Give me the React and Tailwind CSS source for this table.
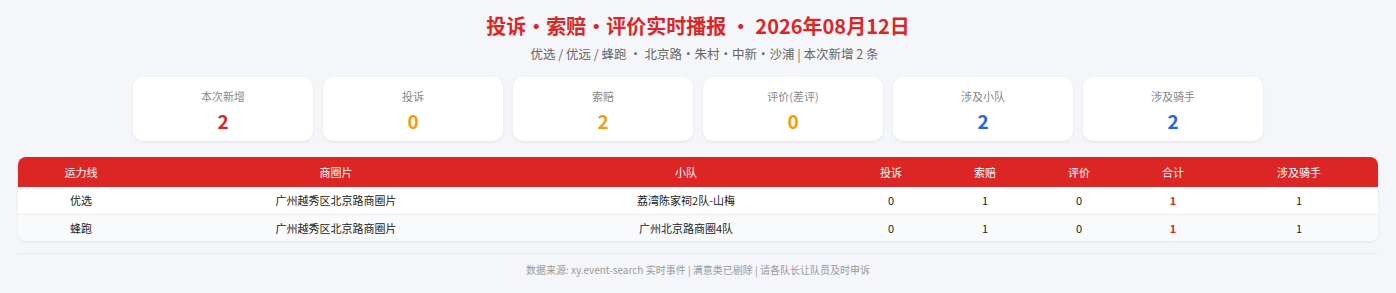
const cards = [
  { label: "本次新增", value: 2, color: "text-[#dc2626]" },
  { label: "投诉", value: 0, color: "text-[#f59e0b]" },
  { label: "索赔", value: 2, color: "text-[#f59e0b]" },
  { label: "评价(差评)", value: 0, color: "text-[#f59e0b]" },
  { label: "涉及小队", value: 2, color: "text-[#2563eb]" },
  { label: "涉及骑手", value: 2, color: "text-[#2563eb]" },
];

const rows = [
  { line: "优选", area: "广州越秀区北京路商圈片", team: "荔湾陈家祠2队-山梅", c: 0, p: 1, r: 0, total: 1, riders: 1 },
  { line: "蜂跑", area: "广州越秀区北京路商圈片", team: "广州北京路商圈4队", c: 0, p: 1, r: 0, total: 1, riders: 1 },
];

function StatCard({ label, value, color }) {
  return (
    <div className="w-[180px] h-[64px] bg-white rounded-[10px] shadow-[0_1px_3px_rgba(0,0,0,0.08)] flex flex-col items-center pt-[12px]">
      <span className="text-[11px] leading-[14px] text-[#888]">{label}</span>
      <span className={`text-[19px] leading-[24px] font-bold mt-[6px] ${color}`}>{value}</span>
    </div>
  );
}

export default function App() {
  return (
    <div
      className="w-[1396px] h-[293px] bg-[#f5f6fa] px-[18px] pt-[12px]"
      style={{ fontFamily: '"Noto Sans CJK SC", "Noto Sans", sans-serif' }}
    >
      <h1 className="text-center text-[20px] leading-[28px] font-bold text-[#dc2626]">
        投诉·索赔·评价实时播报 · 2026年08月12日
      </h1>
      <p className="text-center text-[12.5px] leading-[16px] text-[#666] mt-[6px] pl-[13px]">
        优选 / 优远 / 蜂跑 · 北京路·朱村·中新·沙浦 | 本次新增 2 条
      </p>

      <div className="flex justify-center gap-[10px] mt-[15px]">
        {cards.map((c) => (
          <StatCard key={c.label} {...c} />
        ))}
      </div>

      <div className="mt-[16px] rounded-[8px] overflow-hidden bg-white shadow-[0_1px_3px_rgba(0,0,0,0.08)]">
        <table className="w-full table-fixed border-collapse text-[11px] text-center">
          <colgroup>
            <col className="w-[126px]" />
            <col className="w-[384px]" />
            <col className="w-[316px]" />
            <col className="w-[94px]" />
            <col className="w-[94px]" />
            <col className="w-[94px]" />
            <col className="w-[94px]" />
            <col className="w-[158px]" />
          </colgroup>
          <thead>
            <tr className="bg-[#dc2626] text-white h-[30px]">
              <th className="font-normal">运力线</th>
              <th className="font-normal">商圈片</th>
              <th className="font-normal">小队</th>
              <th className="font-normal">投诉</th>
              <th className="font-normal">索赔</th>
              <th className="font-normal">评价</th>
              <th className="font-normal">合计</th>
              <th className="font-normal">涉及骑手</th>
            </tr>
          </thead>
          <tbody className="text-[#222]">
            {rows.map((r, i) => (
              <tr
                key={i}
                className={`h-[27px] ${i === 0 ? "bg-white border-b border-[#eceef2]" : "bg-[#f9fafb]"}`}
              >
                <td>{r.line}</td>
                <td>{r.area}</td>
                <td>{r.team}</td>
                <td>{r.c}</td>
                <td>{r.p}</td>
                <td>{r.r}</td>
                <td className="text-[#dc2626] font-bold">{r.total}</td>
                <td>{r.riders}</td>
              </tr>
            ))}
          </tbody>
        </table>
      </div>

      <div className="mt-[12px] border-t border-[#e8eaee] pt-[9px] text-center text-[10px] leading-[14px] text-[#999]">
        数据来源: xy.event-search 实时事件 | 满意类已剔除 | 请各队长让队员及时申诉
      </div>
    </div>
  );
}
